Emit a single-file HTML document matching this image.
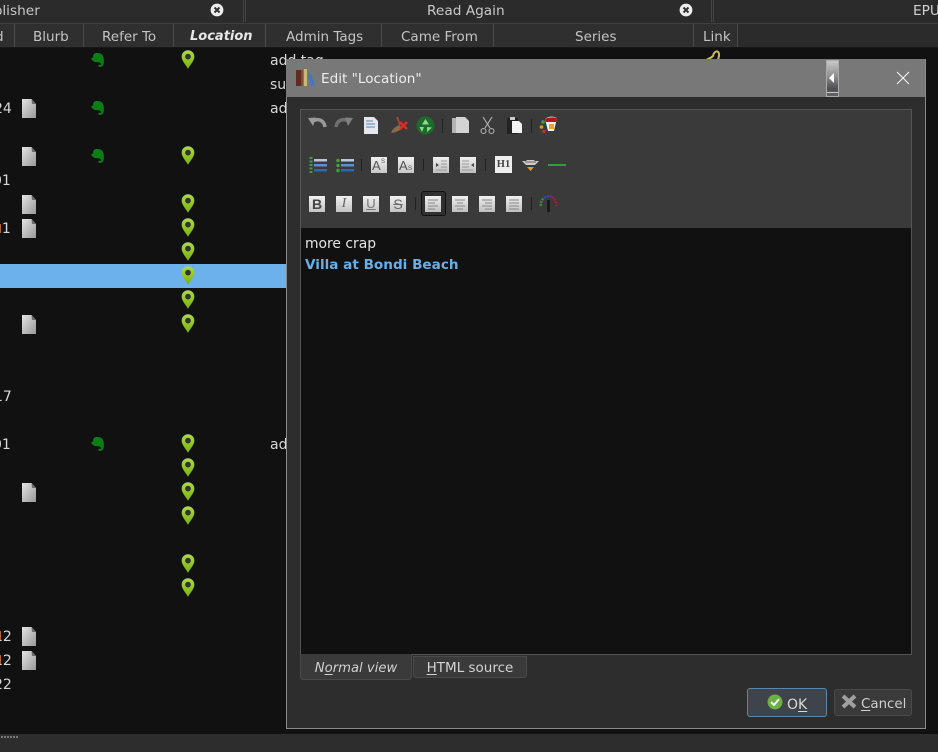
<!DOCTYPE html>
<html><head><meta charset="utf-8">
<style>
html,body{margin:0;padding:0;width:938px;height:752px;overflow:hidden;background:#111}
body{position:relative;font-family:"DejaVu Sans","Liberation Sans",sans-serif;font-size:14px;color:#d8d8d8}
.a{position:absolute}
.t{position:absolute;white-space:nowrap;line-height:20px}
.h{position:absolute;top:25px;height:22px;line-height:24px;text-align:center;color:#c4c4c4;font-size:13.5px;white-space:nowrap}
.v{position:absolute;top:24px;width:1px;height:23px;background:#4a4a4a}
svg{position:absolute;overflow:visible}
u{text-underline-offset:2px}
.tb svg,.tb .i{filter:blur(.35px)}
</style></head><body>
<svg width="0" height="0" style="position:absolute">
<defs>
<linearGradient id="pg" x1="0" y1="0" x2="0" y2="1"><stop offset="0" stop-color="#b0dc40"/><stop offset="1" stop-color="#74b010"/></linearGradient>
<linearGradient id="dg" x1="0" y1="0" x2="1" y2="1"><stop offset="0" stop-color="#e4e4e4"/><stop offset="1" stop-color="#989898"/></linearGradient>
<linearGradient id="ic" x1="0" y1="0" x2="0" y2="1"><stop offset="0" stop-color="#f0f0f0"/><stop offset="1" stop-color="#c0c0c0"/></linearGradient>
<symbol id="pin" viewBox="0 0 14 20"><path d="M7 .3C3.300.3.300 3.300.300 7c0 4.200 3.900 8 6.700 12.800C9.800 15 13.700 11.200 13.700 7 13.700 3.300 10.700.3 7 .3z" fill="url(#pg)"/><circle cx="7" cy="7" r="3" fill="#33352a"/></symbol>
<symbol id="doc" viewBox="0 0 14 19"><path d="M0 0H9.500L14 5V19H0z" fill="url(#dg)"/><path d="M9.500 0L14 5H10z" fill="#6e6e6e"/></symbol>
<symbol id="ele" viewBox="0 0 13 14"><path d="M3.500.5C5.500-.3 9.500-.2 11 1.500 12.800 3.500 13 7 12.800 9.500 12.600 12 11.500 14 9 14 7.500 14 6.800 12.800 7.800 11.500L10 12C10.500 10 8.500 9.300 6.500 9.300 3.500 9.200 .8 8 .1 5.200 1.300 5.300 2.200 4.500 2.200 3 2.200 1.800 2.600 1 3.500.5z" fill="#0a7d14"/></symbol>
</defs>
</svg>

<!-- top tabs -->
<div class="a" style="left:0;top:0;width:938px;height:23px;background:#2b2b2b;border-bottom:1px solid #3f3f3f"></div>
<div class="a" style="left:243px;top:0;width:3px;height:22px;border-left:1px solid #444;border-right:1px solid #444;box-sizing:border-box"></div>
<div class="a" style="left:711px;top:0;width:3px;height:22px;border-left:1px solid #444;border-right:1px solid #444;box-sizing:border-box"></div>
<div class="t" style="left:-23px;top:1px;color:#c8c8c8;font-size:13.7px">Publisher</div>
<div class="t" style="left:427px;top:1px;color:#c8c8c8;font-size:13.7px">Read Again</div>
<div class="t" style="left:913px;top:1px;color:#d0d0d0;font-size:13.7px">EPUB</div>
<svg style="left:210px;top:3px" width="14" height="14" viewBox="0 0 14 14"><circle cx="7" cy="7" r="6.400" fill="#eee"/><path d="M4.500 4.500L9.500 9.500M9.500 4.500L4.500 9.500" stroke="#333" stroke-width="2"/></svg>
<svg style="left:679px;top:3px" width="14" height="14" viewBox="0 0 14 14"><circle cx="7" cy="7" r="6.400" fill="#eee"/><path d="M4.500 4.500L9.500 9.500M9.500 4.500L4.500 9.500" stroke="#333" stroke-width="2"/></svg>

<!-- column headers -->
<div class="a" style="left:0;top:24px;width:738px;height:23px;background:#2f2f2f"></div>
<div class="a" style="left:738px;top:24px;width:200px;height:23px;background:#2b2b2b"></div>
<div class="a" style="left:0;top:47px;width:938px;height:1px;background:#181818"></div>
<div class="v" style="left:14px"></div><div class="v" style="left:83px"></div><div class="v" style="left:173px"></div><div class="v" style="left:265px"></div><div class="v" style="left:381px"></div><div class="v" style="left:493px"></div><div class="v" style="left:693px"></div><div class="v" style="left:737px"></div>
<div class="h" style="left:-5px">d</div>
<div class="h" style="left:33px">Blurb</div>
<div class="h" style="left:102px">Refer To</div>
<div class="h" style="left:190px;font-weight:bold;font-style:italic;color:#e8e8e8;font-size:13px">Location</div>
<div class="h" style="left:286px">Admin Tags</div>
<div class="h" style="left:401px">Came From</div>
<div class="h" style="left:575px">Series</div>
<div class="h" style="left:703px">Link</div>

<!-- list -->
<div class="a" style="left:0;top:264px;width:287px;height:24px;background:#6cb1ec"></div>
<svg style="left:705px;top:50px" width="16" height="10" viewBox="0 0 16 10"><path d="M2 9.500C4 8.500 6 8 8 6 8.500 3 10.500 1 12.500 1.500 14.500 2.500 14.500 6 13 9.500" fill="none" stroke="#c9bb5c" stroke-width="2"/></svg>

<svg style="left:181px;top:50px" width="14" height="19"><use href="#pin"/></svg>
<svg style="left:181px;top:146px" width="14" height="19"><use href="#pin"/></svg>
<svg style="left:181px;top:194px" width="14" height="19"><use href="#pin"/></svg>
<svg style="left:181px;top:218px" width="14" height="19"><use href="#pin"/></svg>
<svg style="left:181px;top:242px" width="14" height="19"><use href="#pin"/></svg>
<svg style="left:181px;top:266px" width="14" height="19"><use href="#pin"/></svg>
<svg style="left:181px;top:290px" width="14" height="19"><use href="#pin"/></svg>
<svg style="left:181px;top:314px" width="14" height="19"><use href="#pin"/></svg>
<svg style="left:181px;top:434px" width="14" height="19"><use href="#pin"/></svg>
<svg style="left:181px;top:458px" width="14" height="19"><use href="#pin"/></svg>
<svg style="left:181px;top:482px" width="14" height="19"><use href="#pin"/></svg>
<svg style="left:181px;top:506px" width="14" height="19"><use href="#pin"/></svg>
<svg style="left:181px;top:554px" width="14" height="19"><use href="#pin"/></svg>
<svg style="left:181px;top:578px" width="14" height="19"><use href="#pin"/></svg>

<svg style="left:22px;top:99px" width="14" height="19"><use href="#doc"/></svg>
<svg style="left:22px;top:147px" width="14" height="19"><use href="#doc"/></svg>
<svg style="left:22px;top:195px" width="14" height="19"><use href="#doc"/></svg>
<svg style="left:22px;top:219px" width="14" height="19"><use href="#doc"/></svg>
<svg style="left:22px;top:315px" width="14" height="19"><use href="#doc"/></svg>
<svg style="left:22px;top:483px" width="14" height="19"><use href="#doc"/></svg>
<svg style="left:22px;top:627px" width="14" height="19"><use href="#doc"/></svg>
<svg style="left:22px;top:651px" width="14" height="19"><use href="#doc"/></svg>

<svg style="left:91px;top:53px" width="13" height="14"><use href="#ele"/></svg>
<svg style="left:91px;top:101px" width="13" height="14"><use href="#ele"/></svg>
<svg style="left:91px;top:149px" width="13" height="14"><use href="#ele"/></svg>
<svg style="left:91px;top:437px" width="13" height="14"><use href="#ele"/></svg>

<div class="t" style="left:270px;top:51px">add tag</div>
<div class="t" style="left:270px;top:75px">su</div>
<div class="t" style="left:270px;top:99px">ad</div>
<div class="t" style="left:270px;top:435px">ad</div>
<div class="t" style="left:-6px;top:99px">24</div>
<div class="t" style="left:-7px;top:171px">01</div>
<div class="t" style="left:-7px;top:219px">11</div>
<div class="t" style="left:-6px;top:387px">17</div>
<div class="t" style="left:-7px;top:435px">01</div>
<div class="t" style="left:-6px;top:627px">12</div>
<div class="t" style="left:-6px;top:651px">12</div>
<div class="t" style="left:-6px;top:675px">22</div>
<div class="a" style="left:0;top:224px;width:1px;height:9px;background:#b0662a"></div>
<div class="a" style="left:0;top:631px;width:1px;height:9px;background:#b0662a"></div>
<div class="a" style="left:0;top:655px;width:1px;height:9px;background:#b0662a"></div>

<!-- status bar -->
<div class="a" style="left:0;top:734px;width:938px;height:18px;background:#2d2d2d"></div>
<div class="a" style="left:1px;top:736px;width:17px;height:2px;background:repeating-linear-gradient(90deg,#777 0 2px,transparent 2px 3px)"></div>

<!-- dialog -->
<div class="a" style="left:286px;top:59px;width:640px;height:670px;background:#2d2d2d;border:1px solid #8a8a8a;border-top:0;box-sizing:border-box"></div>
<div class="a" style="left:286px;top:59px;width:639px;height:38px;background:#787878"></div>
<svg style="left:296px;top:69px" width="20" height="18" viewBox="0 0 20 18"><rect x="0" y="1" width="5" height="16" fill="#5a2e22"/><rect x="5" y="1" width="2" height="16" fill="#8a4a30"/><rect x="8" y="0" width="3" height="17" fill="#c8b878"/><path d="M12 5L14 3 19 16 15 17z" fill="#3f78c4"/></svg>
<div class="t" style="left:321px;top:69px;color:#eee;font-size:13.6px;line-height:21px">Edit "Location"</div>
<div class="a" style="left:826px;top:60px;width:13px;height:37px;background:linear-gradient(#c8c8c8,#8c8c8c 45%,#4c4c52 80%,#66666a);border:1px solid #aaa;box-sizing:border-box"></div>
<div class="a" style="left:827px;top:92px;width:11px;height:1px;background:#ccc"></div>
<svg style="left:829px;top:73px" width="6" height="10"><path d="M5 0V10L0 5z" fill="#fff"/></svg>
<svg style="left:896px;top:71px" width="14" height="14"><path d="M1 1L13 13M13 1L1 13" stroke="#f0f0f0" stroke-width="1.200"/></svg>

<!-- editor -->
<div class="a" style="left:300px;top:109px;width:612px;height:546px;border:1px solid #555;box-sizing:border-box;background:#111"></div>
<div class="a" style="left:301px;top:110px;width:610px;height:118px;background:#3a3a3a"></div>

<div class="tb">
<!-- toolbar row 1 -->
<svg style="left:307px;top:116px" width="20" height="18" viewBox="0 0 20 18"><path d="M6 5C11 2 17 4 18 11" fill="none" stroke="#9a9a9a" stroke-width="3.500"/><path d="M1 2L9 1.500 6 10z" fill="#9a9a9a"/></svg>
<svg style="left:334px;top:116px" width="20" height="18" viewBox="0 0 20 18"><path d="M14 5C9 2 3 4 2 11" fill="none" stroke="#707070" stroke-width="3.500"/><path d="M19 2L11 1.500 14 10z" fill="#808080"/></svg>
<svg style="left:364px;top:117px" width="14" height="17" viewBox="0 0 14 17"><path d="M0 0H10L14 4V17H0z" fill="#e4e8ee"/><path d="M2 4H9M2 7H11M2 10H11" stroke="#8ca4c4" stroke-width="1.400"/></svg>
<svg style="left:390px;top:116px" width="18" height="18" viewBox="0 0 18 18"><path d="M1 17C3 12 6 10 10 9L12 13C8 15 5 17 1 17z" fill="#8a6a4a"/><path d="M7 1L10 9" stroke="#a04a30" stroke-width="2"/><path d="M10 6L17 13M17 6L10 13" stroke="#dc2c24" stroke-width="2.500"/></svg>
<svg style="left:416px;top:116px" width="19" height="19" viewBox="0 0 19 19"><circle cx="9.500" cy="9.500" r="9" fill="#1d6a2c"/><path d="M9.500 3L13 8.500H6zM3.500 11L8 11 6 16zM11 16V11L16 11.500z" fill="#8adc8c"/></svg>
<div class="a" style="left:442px;top:119px;width:1px;height:14px;background:#222"></div>
<svg style="left:452px;top:117px" width="17" height="17" viewBox="0 0 17 17"><rect x="0" y="1" width="12" height="15" fill="#b4b4b4"/><path d="M4 0H13L17 4V16H4z" fill="#d4d4d4"/></svg>
<svg style="left:480px;top:116px" width="15" height="18" viewBox="0 0 15 18" fill="none" stroke="#b4b4b4" stroke-width="1.100"><path d="M3 1L10 12M12 1L5 12"/><circle cx="3.500" cy="15" r="2.500"/><circle cx="11.500" cy="15" r="2.500"/></svg>
<svg style="left:506px;top:117px" width="17" height="17" viewBox="0 0 17 17"><rect x="1" y="1" width="11" height="16" fill="#222"/><rect x="4" y="0" width="5" height="3" fill="#ccc"/><path d="M6 4H13L16 7V16H6z" fill="#f2f2f2"/></svg>
<div class="a" style="left:531px;top:119px;width:1px;height:14px;background:#222"></div>
<svg style="left:539px;top:116px" width="19" height="19" viewBox="0 0 19 19"><circle cx="4" cy="6" r="1.800" fill="#3aa040"/><circle cx="2.500" cy="11" r="1.800" fill="#d0a020"/><circle cx="5" cy="15.500" r="1.800" fill="#c03030"/><path d="M6 3C9 0 15 0 18 2L15 15H9z" fill="#f0f0f0"/><path d="M6 3C9 1 15 1 18 2L17 6H7z" fill="#b01818"/><rect x="10" y="8" width="5" height="5" fill="#e8a820"/></svg>

<!-- toolbar row 2 -->
<svg style="left:309px;top:157px" width="18" height="17" viewBox="0 0 18 17"><path d="M2 0V17" fill="none" stroke="#3aa040" stroke-width="3" stroke-dasharray="2 1.500"/><path d="M5 2H18V4.500H5z" fill="#b8c8dc"/><path d="M5 7H18V9.500H5z" fill="#5f90c8"/><path d="M5 12H18V14.500H5z" fill="#2f68b0"/></svg>
<svg style="left:336px;top:157px" width="18" height="17" viewBox="0 0 18 17"><circle cx="2" cy="3.500" r="1.800" fill="#3aa040"/><circle cx="2" cy="8.500" r="1.800" fill="#3aa040"/><circle cx="2" cy="13.500" r="1.800" fill="#3aa040"/><path d="M5 2H18V4.500H5z" fill="#b8c8dc"/><path d="M5 7H18V9.500H5z" fill="#5f90c8"/><path d="M5 12H18V14.500H5z" fill="#2f68b0"/></svg>
<div class="a" style="left:361px;top:159px;width:1px;height:12px;background:#222"></div>
<div class="a i" style="left:371px;top:157px;width:16px;height:16px;background:linear-gradient(#f0f0f0,#c8c8c8);font:13px/18px 'Liberation Sans',sans-serif;color:#555;white-space:nowrap;padding-left:1px;box-sizing:border-box">A<span style="font-size:6px;position:absolute;left:10px;top:-4px">S</span></div>
<div class="a i" style="left:398px;top:157px;width:16px;height:16px;background:linear-gradient(#f0f0f0,#c8c8c8);font:13px/18px 'Liberation Sans',sans-serif;color:#555;white-space:nowrap;padding-left:1px;box-sizing:border-box">A<span style="font-size:6px;position:absolute;left:10px;top:3px">S</span></div>
<div class="a" style="left:423px;top:159px;width:1px;height:12px;background:#222"></div>
<svg style="left:433px;top:157px" width="16" height="16" viewBox="0 0 16 16"><rect width="16" height="16" fill="url(#ic)"/><path d="M8 4H14M8 7H14M8 10H14M3 13H14" stroke="#999"/><path d="M3 6L6 8 3 10z" fill="#444"/></svg>
<svg style="left:460px;top:157px" width="16" height="16" viewBox="0 0 16 16"><rect width="16" height="16" fill="url(#ic)"/><path d="M2 4H9M2 7H9M2 10H9M2 13H13" stroke="#999"/><path d="M14 6L11 8 14 10z" fill="#444"/></svg>
<div class="a" style="left:485px;top:159px;width:1px;height:12px;background:#222"></div>
<div class="a i" style="left:495px;top:156px;width:17px;height:17px;background:#eee;color:#444;font:bold 10.500px/17px 'Liberation Serif',serif;text-align:center">H1</div>
<svg style="left:522px;top:159px" width="17" height="15" viewBox="0 0 17 15"><path d="M0 2H4L5 1H12L13 2H17L13 6H4z" fill="#ccc"/><path d="M3 3H14" stroke="#666"/><path d="M5 8H12L8.500 12z" fill="#e89a30"/></svg>
<div class="a" style="left:548px;top:164px;width:18px;height:2px;background:#2fa040"></div>

<!-- toolbar row 3 -->
<div class="a" style="left:421px;top:191px;width:25px;height:25px;background:#303030;border:1px solid #111;border-radius:3px;box-sizing:border-box"></div>
<div class="a i" style="left:309px;top:196px;width:16px;height:16px;background:linear-gradient(#f0f0f0,#c4c4c4);color:#444;font:bold 14px/16px 'Liberation Sans',sans-serif;text-align:center">B</div>
<div class="a i" style="left:336px;top:196px;width:16px;height:16px;background:linear-gradient(#f0f0f0,#c4c4c4);color:#666;font:italic 14px/16px 'Liberation Serif',serif;text-align:center">I</div>
<div class="a i" style="left:363px;top:196px;width:16px;height:16px;background:linear-gradient(#f0f0f0,#c4c4c4);color:#777;font:13px/15px 'Liberation Sans',sans-serif;text-align:center;text-decoration:underline">U</div>
<div class="a i" style="left:390px;top:196px;width:16px;height:16px;background:linear-gradient(#f0f0f0,#c4c4c4);color:#666;font:14px/16px 'Liberation Sans',sans-serif;text-align:center;text-decoration:line-through">S</div>
<div class="a" style="left:415px;top:197px;width:1px;height:13px;background:#222"></div>
<svg style="left:425px;top:196px" width="16" height="16" viewBox="0 0 16 16"><rect width="16" height="16" fill="url(#ic)"/><path d="M3 4H13M3 7H10M3 10H13M3 13H10" stroke="#888"/></svg>
<svg style="left:452px;top:196px" width="16" height="16" viewBox="0 0 16 16"><rect width="16" height="16" fill="url(#ic)"/><path d="M3 4H13M5 7H11M3 10H13M5 13H11" stroke="#888"/></svg>
<svg style="left:479px;top:196px" width="16" height="16" viewBox="0 0 16 16"><rect width="16" height="16" fill="url(#ic)"/><path d="M3 4H13M6 7H13M3 10H13M6 13H13" stroke="#888"/></svg>
<svg style="left:506px;top:196px" width="16" height="16" viewBox="0 0 16 16"><rect width="16" height="16" fill="url(#ic)"/><path d="M3 4H13M3 7H13M3 10H13M3 13H13" stroke="#888"/></svg>
<div class="a" style="left:531px;top:197px;width:1px;height:13px;background:#222"></div>
<svg style="left:539px;top:195px" width="19" height="18" viewBox="0 0 19 18"><path d="M9.500 17V5" stroke="#151515" stroke-width="2.500"/><path d="M2 11A8 8 0 0 1 5 3" fill="none" stroke="#3a9030" stroke-width="2.500" stroke-dasharray="2 1"/><path d="M5 3A8 8 0 0 1 13 2" fill="none" stroke="#4040b0" stroke-width="2.500" stroke-dasharray="2 1"/><path d="M13 2A8 8 0 0 1 17 11" fill="none" stroke="#a02040" stroke-width="2.500" stroke-dasharray="2 1"/></svg>
</div>

<!-- text -->
<div class="t" style="left:305px;top:234px;color:#e4e4e4;font-size:13.9px;line-height:21px">more crap</div>
<div class="t" style="left:305px;top:255px;color:#6aaee6;font-size:13.6px;font-weight:bold;line-height:21px">Villa at Bondi Beach</div>

<!-- tabs -->
<div class="a" style="left:300px;top:654px;width:112px;height:26px;background:#3a3a3a;border:1px solid #4a4a4a;border-top:0;border-radius:0 0 3px 3px;box-sizing:border-box;text-align:center;font-style:italic;font-size:13.2px;line-height:30px;color:#d0d0d0"><span>N<u>o</u>rmal view</span></div>
<div class="a" style="left:413px;top:656px;width:114px;height:22px;background:#3a3a3a;border:1px solid #4a4a4a;border-radius:0 0 3px 3px;box-sizing:border-box;text-align:center;font-size:13.5px;line-height:23px;color:#d4d4d4"><u>H</u>TML source</div>

<!-- buttons -->
<div class="a" style="left:747px;top:688px;width:80px;height:29px;background:#3e4449;border:1px solid #5d87a8;border-radius:3px;box-sizing:border-box"></div>
<svg style="left:767px;top:694px" width="16" height="16" viewBox="0 0 16 16"><circle cx="8" cy="8" r="7.500" fill="#6cb044"/><path d="M4 8L7 11 12 5" fill="none" stroke="#f4f4f4" stroke-width="2"/></svg>
<div class="t" style="left:787px;top:695px;font-size:14px;color:#d8d8d8">O<u>K</u></div>
<div class="a" style="left:834px;top:689px;width:78px;height:27px;background:#3a3a3a;border:1px solid #4a4a4a;border-radius:3px;box-sizing:border-box"></div>
<svg style="left:841px;top:694px" width="16" height="15" viewBox="0 0 16 15"><path d="M2 2L14 13M14 2L2 13" stroke="#a0a0a0" stroke-width="4"/></svg>
<div class="t" style="left:861px;top:695px;font-size:13.4px;color:#d0d0d0"><u>C</u>ancel</div>
</body></html>
